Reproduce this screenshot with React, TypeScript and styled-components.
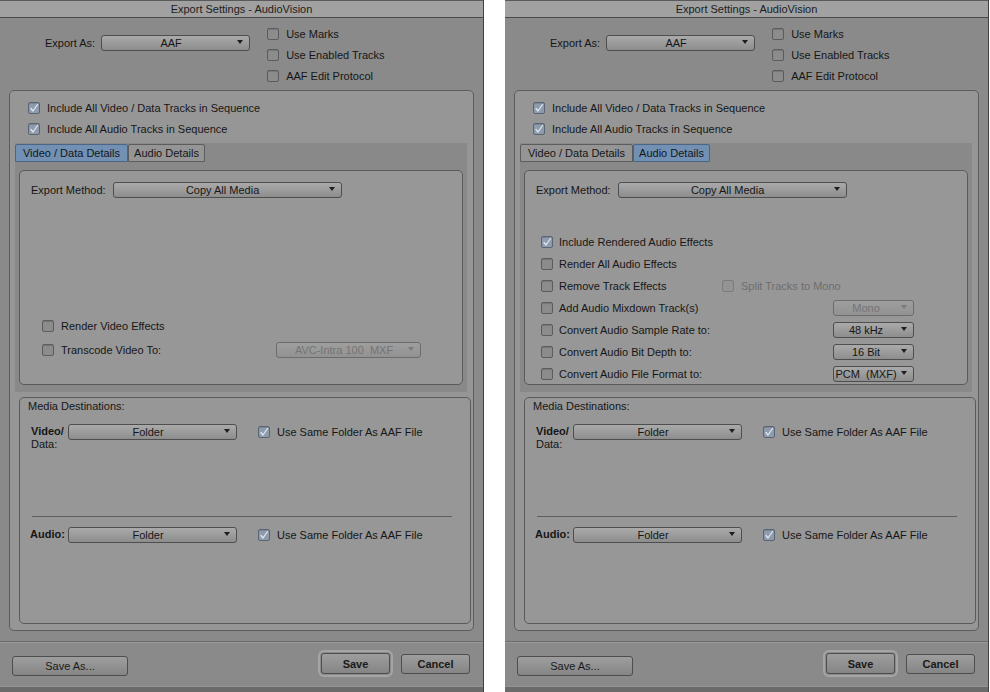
import styled, { createGlobalStyle, css } from 'styled-components'

type Tab = 'video' | 'audio'

const GlobalStyle = createGlobalStyle`
  html, body {
    margin: 0;
    padding: 0;
    background: #fff;
  }
  body {
    font-family: "Liberation Sans", Arial, sans-serif;
    font-size: 11px;
    color: #161616;
  }
`

const Screen = styled.div`
  display: flex;
  gap: 21px;
  width: 990px;
  height: 692px;
  overflow: hidden;
`

const Window = styled.div`
  flex: none;
  width: 484px;
  height: 692px;
  display: flex;
  flex-direction: column;
  box-sizing: border-box;
  background: #8a8a8a;
  border-right: 1px solid #404040;
`

const TitleBar = styled.div`
  height: 16px;
  line-height: 17px;
  text-align: center;
  background: #a1a1a1;
  border-top: 1px solid #5a5a5a;
  border-bottom: 1px solid #4a4a4a;
  color: #1c1c1c;
`

const Header = styled.div`
  display: flex;
  align-items: flex-start;
  height: 67px;
  padding: 5px 0 0 45px;
`

const ExportAs = styled.div`
  display: flex;
  align-items: center;
  gap: 6px;
  margin-top: 12px;
`

const OptionColumn = styled.div`
  display: flex;
  flex-direction: column;
  margin-left: 17px;
`

const CheckRow = styled.div<{ $h?: number; $gap?: number }>`
  display: flex;
  align-items: center;
  height: ${p => p.$h ?? 21}px;
  gap: ${p => p.$gap ?? 7}px;
`

const Box = styled.span<{ $checked?: boolean; $disabled?: boolean }>`
  flex: none;
  display: inline-flex;
  align-items: center;
  justify-content: center;
  width: 12px;
  height: 12px;
  box-sizing: border-box;
  border: 1px solid #5c5c5c;
  border-radius: 2px;
  background: #8c8c8c;
  box-shadow: inset 0 1px 1px rgba(0, 0, 0, 0.15);
  ${p => p.$checked && css`
    background: #8f9cae;
    border-color: #5a6472;
  `}
  ${p => p.$disabled && css`
    background: #939393;
    border-color: #7c7c7c;
    box-shadow: none;
  `}
`

const Label = styled.span<{ $disabled?: boolean }>`
  white-space: nowrap;
  color: ${p => (p.$disabled ? '#6e6e6e' : '#161616')};
`

const GroupBox = styled.div`
  display: flex;
  flex-direction: column;
  margin: 0 9px 0 9px;
  padding: 6px 2px 6px 5px;
  background: #969696;
  border: 1px solid #5d5d5d;
  border-radius: 5px;
`

const TrackList = styled.div`
  padding-left: 13px;
`

const TabArea = styled.div`
  margin: 4px 4px 0 0;
  padding: 1px 0 7px;
  background: #898989;
`

const Tabs = styled.div`
  display: flex;
  height: 18px;
`

const TabButton = styled.div<{ $w: number; $active?: boolean }>`
  width: ${p => p.$w}px;
  box-sizing: border-box;
  line-height: 16px;
  text-align: center;
  border: 1px solid #5c5c5c;
  border-radius: 2px 2px 0 0;
  background: #959595;
  ${p => p.$active && css`
    background: #7190b3;
    border-color: #4c6585;
  `}
`

const Panel = styled.div`
  display: flex;
  flex-direction: column;
  height: 215px;
  box-sizing: border-box;
  margin: 8px 4px 0;
  padding: 11px 0 0 11px;
  background: #979797;
  border: 1px solid #5a5a5a;
  border-radius: 5px;
`

const FieldRow = styled.div`
  display: flex;
  align-items: center;
  gap: 7px;
`

const Dropdown = styled.div<{ $w: number; $disabled?: boolean; $pad?: number }>`
  position: relative;
  flex: none;
  width: ${p => p.$w}px;
  height: 16px;
  box-sizing: border-box;
  padding-right: ${p => p.$pad ?? 9}px;
  line-height: 14px;
  text-align: center;
  white-space: pre;
  border: 1px solid #4e4e4e;
  border-radius: 3px;
  background: linear-gradient(#aaaaaa, #8d8d8d);
  color: #161616;

  &::after {
    content: '';
    position: absolute;
    right: 6px;
    top: 4px;
    border-left: 3.5px solid transparent;
    border-right: 3.5px solid transparent;
    border-top: 4px solid #1e1e1e;
  }

  ${p => p.$disabled && css`
    color: #747474;
    border-color: #6c6c6c;
    background: linear-gradient(#9e9e9e, #929292);
    &::after {
      border-top-color: #7a7a7a;
    }
  `}
`

const VideoOptions = styled.div`
  margin-top: auto;
  padding: 0 41px 22px 11px;
`

const AudioOptions = styled.div`
  margin-top: 33px;
  padding: 0 53px 0 5px;
`

const AudioLabel = styled(Label)`
  width: 157px;
  flex: none;
`

const Push = styled.div`
  margin-left: auto;
`

const ButtonPair = styled.div`
  display: flex;
  gap: 11px;
  margin-left: auto;
`

const MediaBox = styled.div`
  display: flex;
  flex-direction: column;
  height: 227px;
  box-sizing: border-box;
  margin: 5px 0 0 4px;
  padding: 1px 0 0 8px;
  background: #979797;
  border: 1px solid #5a5a5a;
  border-radius: 5px;
`

const MediaTitle = styled.div`
  line-height: 14px;
`

const DestRow = styled.div<{ $top: number }>`
  display: flex;
  align-items: flex-start;
  margin-top: ${p => p.$top}px;
`

const DestLabel = styled.div<{ $left: number }>`
  width: ${p => 40 - p.$left}px;
  margin-left: ${p => p.$left}px;
  line-height: 13px;
  padding-top: 1px;

  b {
    font-weight: bold;
  }
`

const DestCheck = styled.div`
  display: flex;
  align-items: center;
  gap: 7px;
  height: 14px;
  margin: 1px 0 0 21px;
`

const Divider = styled.div`
  height: 1px;
  margin: 65px 18px 0 4px;
  background: #5e5e5e;
`

const Footer = styled.div`
  display: flex;
  align-items: flex-start;
  height: 44px;
  margin-top: 10px;
  padding: 0 13px 0 12px;
  border-top: 1px solid #6c6c6c;
  box-shadow: inset 0 1px 0 #9a9a9a;
`

const Button = styled.button<{ $w: number; $bold?: boolean; $default?: boolean; $top: number }>`
  width: ${p => p.$w}px;
  height: ${p => (p.$default ? 21 : 20)}px;
  margin-top: ${p => p.$top}px;
  padding: 0;
  font: inherit;
  font-weight: ${p => (p.$bold ? 'bold' : 'normal')};
  color: #1a1a1a;
  border: 1px solid #4e4e4e;
  border-radius: 3px;
  background: linear-gradient(#9e9e9e, #858585);
  ${p => p.$default && css`
    outline: 2px solid #a5a5a5;
    outline-offset: 1px;
  `}
`

const BottomEdge = styled.div`
  height: 5px;
  background: #6a6a6a;
  border-top: 1px solid #959595;
`

function Check({ checked, disabled }: { checked?: boolean; disabled?: boolean }) {
  return (
    <Box $checked={checked} $disabled={disabled}>
      {checked && (
        <svg width="10" height="10" viewBox="0 0 10 10">
          <path d="M2 5.5 L4 8 L8.5 1.5" fill="none" stroke="#dfe6ef" strokeWidth="1.3" strokeLinecap="round" strokeLinejoin="round" />
        </svg>
      )}
    </Box>
  )
}

function Option({ label, checked, disabled, h }: { label: string; checked?: boolean; disabled?: boolean; h?: number }) {
  return (
    <CheckRow $h={h}>
      <Check checked={checked} disabled={disabled} />
      <Label $disabled={disabled}>{label}</Label>
    </CheckRow>
  )
}

const audioRows: { label: string; checked?: boolean; split?: boolean; menu?: string; menuOff?: boolean }[] = [
  { label: 'Include Rendered Audio Effects', checked: true },
  { label: 'Render All Audio Effects' },
  { label: 'Remove Track Effects', split: true },
  { label: 'Add Audio Mixdown Track(s)', menu: 'Mono', menuOff: true },
  { label: 'Convert Audio Sample Rate to:', menu: '48 kHz' },
  { label: 'Convert Audio Bit Depth to:', menu: '16 Bit' },
  { label: 'Convert Audio File Format to:', menu: 'PCM  (MXF)' },
]

function ExportSettings({ tab }: { tab: Tab }) {
  return (
    <Window>
      <TitleBar>Export Settings - AudioVision</TitleBar>
      <Header>
        <ExportAs>
          <Label>Export As:</Label>
          <Dropdown $w={149}>AAF</Dropdown>
        </ExportAs>
        <OptionColumn>
          <Option label="Use Marks" />
          <Option label="Use Enabled Tracks" />
          <Option label="AAF Edit Protocol" />
        </OptionColumn>
      </Header>

      <GroupBox>
        <TrackList>
          <Option label="Include All Video / Data Tracks in Sequence" checked />
          <Option label="Include All Audio Tracks in Sequence" checked />
        </TrackList>

        <TabArea>
          <Tabs>
            <TabButton $w={113} $active={tab === 'video'}>Video / Data Details</TabButton>
            <TabButton $w={77} $active={tab === 'audio'}>Audio Details</TabButton>
          </Tabs>
          <Panel>
            <FieldRow>
              <Label>Export Method:</Label>
              <Dropdown $w={229}>Copy All Media</Dropdown>
            </FieldRow>

            {tab === 'video' ? (
              <VideoOptions>
                <Option label="Render Video Effects" h={24} />
                <CheckRow $h={24}>
                  <Check />
                  <Label>Transcode Video To:</Label>
                  <Push>
                    <Dropdown $w={145} $disabled>AVC-Intra 100  MXF</Dropdown>
                  </Push>
                </CheckRow>
              </VideoOptions>
            ) : (
              <AudioOptions>
                {audioRows.map(row => (
                  <CheckRow key={row.label} $h={22} $gap={6}>
                    <Check checked={row.checked} />
                    <AudioLabel>{row.label}</AudioLabel>
                    {row.split && (
                      <CheckRow $h={22}>
                        <Check disabled />
                        <Label $disabled>Split Tracks to Mono</Label>
                      </CheckRow>
                    )}
                    {row.menu && (
                      <Push>
                        <Dropdown $w={81} $pad={15} $disabled={row.menuOff}>{row.menu}</Dropdown>
                      </Push>
                    )}
                  </CheckRow>
                ))}
              </AudioOptions>
            )}
          </Panel>
        </TabArea>

        <MediaBox>
          <MediaTitle>Media Destinations:</MediaTitle>
          <DestRow $top={11}>
            <DestLabel $left={3}>
              <b>Video/</b>
              <br />
              Data:
            </DestLabel>
            <Dropdown $w={169}>Folder</Dropdown>
            <DestCheck>
              <Check checked />
              <Label>Use Same Folder As AAF File</Label>
            </DestCheck>
          </DestRow>
          <Divider />
          <DestRow $top={10}>
            <DestLabel $left={2}>
              <b>Audio:</b>
            </DestLabel>
            <Dropdown $w={169}>Folder</Dropdown>
            <DestCheck>
              <Check checked />
              <Label>Use Same Folder As AAF File</Label>
            </DestCheck>
          </DestRow>
        </MediaBox>
      </GroupBox>

      <Footer>
        <Button $w={116} $top={14}>Save As...</Button>
        <ButtonPair>
          <Button $w={69} $top={11} $bold $default>Save</Button>
          <Button $w={69} $top={12} $bold>Cancel</Button>
        </ButtonPair>
      </Footer>
      <BottomEdge />
    </Window>
  )
}

export default function App() {
  return (
    <>
      <GlobalStyle />
      <Screen>
        <ExportSettings tab="video" />
        <ExportSettings tab="audio" />
      </Screen>
    </>
  )
}
